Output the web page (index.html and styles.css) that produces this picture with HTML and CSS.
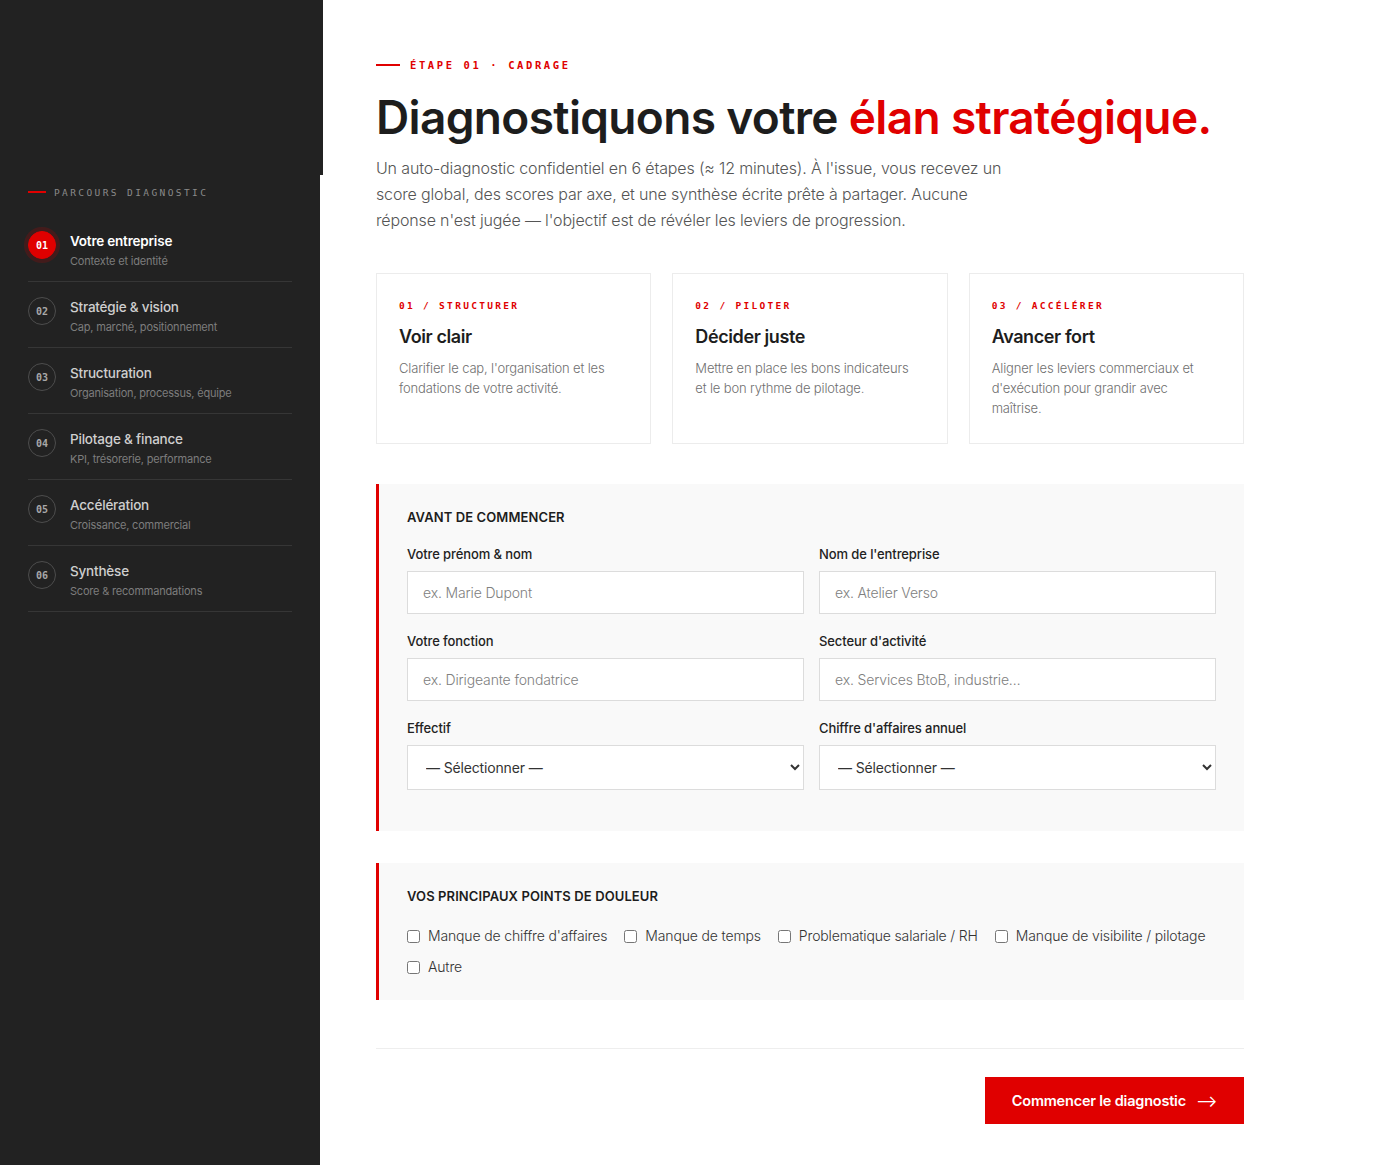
FILE: index.html
```html
<!DOCTYPE html>
<html lang="fr">
<head>
<meta charset="utf-8">
<title>Diagnostic</title>
<link rel="stylesheet" href="styles.css">
</head>
<body>
<div class="layout">
  <aside class="sidebar">
    <div class="side-label"><span class="dash"></span>PARCOURS DIAGNOSTIC</div>
    <ul class="steps">
      <li class="step active">
        <span class="num">01</span>
        <div class="step-text"><div class="step-title">Votre entreprise</div><div class="step-sub">Contexte et identité</div></div>
      </li>
      <li class="step">
        <span class="num">02</span>
        <div class="step-text"><div class="step-title">Stratégie &amp; vision</div><div class="step-sub">Cap, marché, positionnement</div></div>
      </li>
      <li class="step">
        <span class="num">03</span>
        <div class="step-text"><div class="step-title">Structuration</div><div class="step-sub">Organisation, processus, équipe</div></div>
      </li>
      <li class="step">
        <span class="num">04</span>
        <div class="step-text"><div class="step-title">Pilotage &amp; finance</div><div class="step-sub">KPI, trésorerie, performance</div></div>
      </li>
      <li class="step">
        <span class="num">05</span>
        <div class="step-text"><div class="step-title">Accélération</div><div class="step-sub">Croissance, commercial</div></div>
      </li>
      <li class="step">
        <span class="num">06</span>
        <div class="step-text"><div class="step-title">Synthèse</div><div class="step-sub">Score &amp; recommandations</div></div>
      </li>
    </ul>
  </aside>
  <main class="main">
    <div class="content">
      <div class="eyebrow"><span class="dash"></span>ÉTAPE 01 · CADRAGE</div>
      <h1 class="headline">Diagnostiquons votre <span class="accent">élan stratégique.</span></h1>
      <p class="lead">Un auto-diagnostic confidentiel en 6 étapes (≈ 12 minutes). À l'issue, vous recevez un score global, des scores par axe, et une synthèse écrite prête à partager. Aucune réponse n'est jugée — l'objectif est de révéler les leviers de progression.</p>

      <div class="cards">
        <div class="card">
          <div class="card-tag">01 / STRUCTURER</div>
          <div class="card-title">Voir clair</div>
          <div class="card-desc">Clarifier le cap, l'organisation et les fondations de votre activité.</div>
        </div>
        <div class="card">
          <div class="card-tag">02 / PILOTER</div>
          <div class="card-title">Décider juste</div>
          <div class="card-desc">Mettre en place les bons indicateurs et le bon rythme de pilotage.</div>
        </div>
        <div class="card">
          <div class="card-tag">03 / ACCÉLÉRER</div>
          <div class="card-title">Avancer fort</div>
          <div class="card-desc">Aligner les leviers commerciaux et d'exécution pour grandir avec maîtrise.</div>
        </div>
      </div>

      <section class="panel panel-form">
        <h2 class="panel-title">AVANT DE COMMENCER</h2>
        <div class="grid">
          <label class="field"><span class="field-label">Votre prénom &amp; nom</span><input type="text" placeholder="ex. Marie Dupont"></label>
          <label class="field"><span class="field-label">Nom de l'entreprise</span><input type="text" placeholder="ex. Atelier Verso"></label>
          <label class="field"><span class="field-label">Votre fonction</span><input type="text" placeholder="ex. Dirigeante fondatrice"></label>
          <label class="field"><span class="field-label">Secteur d'activité</span><input type="text" placeholder="ex. Services BtoB, industrie…"></label>
          <label class="field"><span class="field-label">Effectif</span><select><option>— Sélectionner —</option></select></label>
          <label class="field"><span class="field-label">Chiffre d'affaires annuel</span><select><option>— Sélectionner —</option></select></label>
        </div>
      </section>

      <section class="panel panel-pain">
        <h2 class="panel-title">VOS PRINCIPAUX POINTS DE DOULEUR</h2>
        <div class="checks">
          <label class="check"><input type="checkbox">Manque de chiffre d'affaires</label>
          <label class="check"><input type="checkbox">Manque de temps</label>
          <label class="check"><input type="checkbox">Problematique salariale / RH</label>
          <label class="check"><input type="checkbox">Manque de visibilite / pilotage</label>
          <label class="check"><input type="checkbox">Autre</label>
        </div>
      </section>

      <div class="actions">
        <button class="cta" type="button">Commencer le diagnostic <span class="arrow">⟶</span></button>
      </div>
    </div>
  </main>
</div>
</body>
</html>
```

FILE: styles.css
```css
* { box-sizing: border-box; }
html, body { margin: 0; padding: 0; }
body {
  font-family: Inter, "Noto Sans", sans-serif;
  color: #222;
  background: #fff;
}
.layout {
  display: flex;
  min-height: 1165px;
}
.sidebar {
  position: relative;
  width: 320px;
  flex: 0 0 320px;
  background: #222222;
  padding: 185px 28px 0 28px;
}
.sidebar::before {
  content: "";
  position: absolute;
  top: 0;
  left: 0;
  width: 323px;
  height: 175px;
  background: #222222;
}
.side-label {
  display: flex;
  align-items: center;
  font-family: "DejaVu Sans Mono", "Liberation Mono", monospace;
  font-size: 9.5px;
  letter-spacing: 2.4px;
  color: #8a8a8a;
  height: 14px;
  margin-bottom: 17px;
}
.side-label .dash {
  display: inline-block;
  width: 18px;
  height: 1.5px;
  background: #e00000;
  margin-right: 8px;
}
.steps {
  list-style: none;
  margin: 0;
  padding: 0;
}
.step {
  display: flex;
  align-items: flex-start;
  gap: 14px;
  height: 66px;
  padding-top: 15px;
  border-bottom: 1px solid #363636;
}
.num {
  flex: 0 0 28px;
  width: 28px;
  height: 28px;
  border-radius: 50%;
  border: 1px solid #4d4d4d;
  display: flex;
  align-items: center;
  justify-content: center;
  font-family: "DejaVu Sans Mono", "Liberation Mono", monospace;
  font-size: 10px;
  font-weight: 700;
  color: #a8a8a8;
}
.step.active .num {
  background: #e00000;
  border-color: #e00000;
  color: #fff;
  box-shadow: 0 0 0 4px rgba(224, 0, 0, 0.18);
}
.step-text { padding-top: 1px; }
.step-title {
  font-size: 13.5px;
  font-weight: 500;
  line-height: 18px;
  color: #cfcfcf;
  letter-spacing: -0.2px;
}
.step.active .step-title { color: #fff; font-weight: 600; }
.step-sub {
  font-size: 11px;
  line-height: 16px;
  margin-top: 3px;
  color: #7d7d7d;
  letter-spacing: -0.2px;
}

.main {
  flex: 1;
  padding: 0 56px;
}
.content {
  width: 868px;
  padding-top: 58px;
}
.eyebrow {
  display: flex;
  align-items: center;
  font-family: "DejaVu Sans Mono", "Liberation Mono", monospace;
  font-size: 10.5px;
  font-weight: 700;
  letter-spacing: 2.6px;
  color: #e00000;
  height: 14px;
}
.eyebrow .dash {
  display: inline-block;
  width: 24px;
  height: 1.5px;
  background: #e00000;
  margin-right: 10px;
}
.headline {
  margin: 14px 0 0 0;
  font-size: 46px;
  font-weight: 600;
  letter-spacing: -0.65px;
  line-height: 62px;
  color: #1d1d1d;
}
.accent { color: #e00000; }
.lead {
  margin: 7px 0 0 0;
  width: 630px;
  font-size: 16px;
  font-weight: 300;
  line-height: 26px;
  color: #555;
  letter-spacing: -0.15px;
}
.cards {
  display: grid;
  grid-template-columns: repeat(3, 1fr);
  gap: 21px;
  margin-top: 40px;
}
.card {
  height: 171px;
  border: 1px solid #ececec;
  padding: 25px 22px;
}
.card-tag {
  font-family: "DejaVu Sans Mono", "Liberation Mono", monospace;
  font-size: 9.5px;
  font-weight: 700;
  letter-spacing: 2.3px;
  color: #e00000;
  line-height: 14px;
}
.card-title {
  margin-top: 12px;
  font-size: 18px;
  font-weight: 600;
  letter-spacing: -0.4px;
  line-height: 24px;
  color: #1d1d1d;
}
.card-desc {
  margin-top: 9px;
  max-width: 215px;
  font-size: 13px;
  font-weight: 300;
  line-height: 20px;
  color: #6f6f6f;
  letter-spacing: -0.15px;
}
.panel {
  background: #f9f9f9;
  border-left: 3px solid #e00000;
  padding: 24px 28px 0 28px;
}
.panel-form { margin-top: 40px; height: 347px; }
.panel-pain { margin-top: 32px; height: 137px; }
.panel-title {
  margin: 0;
  font-size: 13px;
  font-weight: 600;
  line-height: 18px;
  color: #1d1d1d;
  letter-spacing: 0.1px;
}
.grid {
  display: grid;
  grid-template-columns: 1fr 1fr;
  column-gap: 15px;
  row-gap: 18px;
  margin-top: 19px;
}
.field { display: flex; flex-direction: column; }
.field-label {
  font-size: 13px;
  font-weight: 500;
  line-height: 18px;
  color: #222;
  margin-bottom: 8px;
  letter-spacing: -0.1px;
}
.field input, .field select {
  font-family: Inter, "Noto Sans", sans-serif;
  font-size: 14px;
  font-weight: 300;
  border: 1px solid #dcdcdc;
  background: #fff;
  border-radius: 0;
  color: #333;
  letter-spacing: -0.15px;
}
.field input {
  height: 43px;
  padding: 0 15px;
}
.field input::placeholder { color: #808080; }
.field select {
  height: 45px;
  padding: 0 14px;
  font-weight: 400;
  color: #333;
}
.checks {
  display: flex;
  flex-wrap: wrap;
  column-gap: 17px;
  row-gap: 11px;
  margin-top: 21px;
}
.check {
  display: flex;
  align-items: center;
  font-size: 14px;
  font-weight: 300;
  color: #333;
  line-height: 20px;
  letter-spacing: -0.15px;
}
.check input {
  width: 13px;
  height: 13px;
  margin: 0 8px 0 0;
}
.actions {
  margin-top: 48px;
  border-top: 1px solid #eeeeee;
  padding-top: 28px;
  display: flex;
  justify-content: flex-end;
}
.cta {
  width: 259px;
  height: 47px;
  background: #e00000;
  color: #fff;
  border: none;
  font-family: Inter, "Noto Sans", sans-serif;
  font-size: 14.5px;
  font-weight: 600;
  letter-spacing: -0.2px;
  display: flex;
  align-items: center;
  justify-content: center;
  gap: 10px;
}
.arrow { font-size: 16px; font-weight: 400; }
```
